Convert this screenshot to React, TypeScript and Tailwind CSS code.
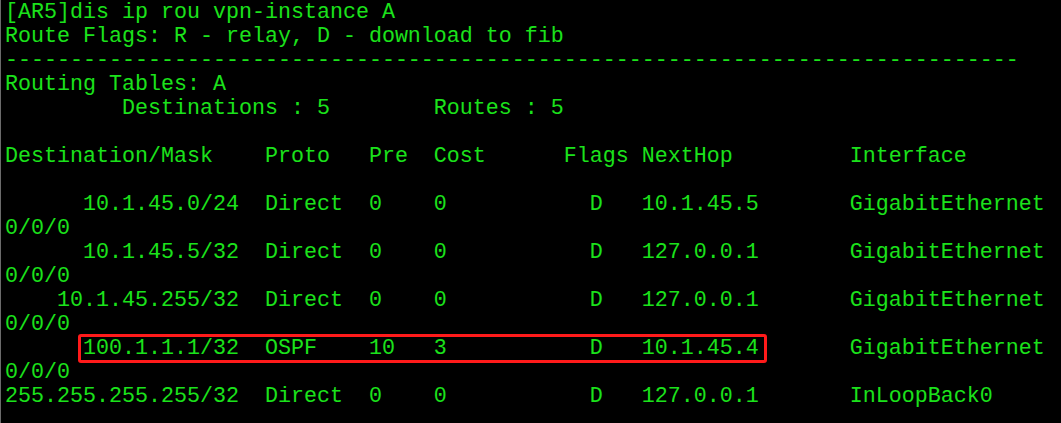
const lines: string[] = [
  "[AR5]dis ip rou vpn-instance A",
  "Route Flags: R - relay, D - download to fib",
  "-".repeat(78),
  "Routing Tables: A",
  "         Destinations : 5        Routes : 5",
  "",
  "Destination/Mask    Proto   Pre  Cost      Flags NextHop         Interface",
  "",
  "      10.1.45.0/24  Direct  0    0           D   10.1.45.5       GigabitEthernet",
  "0/0/0",
  "      10.1.45.5/32  Direct  0    0           D   127.0.0.1       GigabitEthernet",
  "0/0/0",
  "    10.1.45.255/32  Direct  0    0           D   127.0.0.1       GigabitEthernet",
  "0/0/0",
  "      100.1.1.1/32  OSPF    10   3           D   10.1.45.4       GigabitEthernet",
  "0/0/0",
  "255.255.255.255/32  Direct  0    0           D   127.0.0.1       InLoopBack0",
];

export default function App() {
  return (
    <div className="relative w-[1061px] h-[423px] overflow-hidden bg-black border-l border-[#6b6b6b]">
      <pre className="pl-[4px] pt-[1px] font-['Liberation_Mono',monospace] text-[21.67px] leading-[24px] text-[#1be21b]">
        {lines.map((l, i) => (
          <div key={i} className="h-[24px]">
            {l}
          </div>
        ))}
      </pre>
      {/* highlight around the OSPF route */}
      <div className="absolute left-[77px] top-[334px] w-[689px] h-[29px] rounded-[3px] border-[3px] border-[#ff1a1a]" />
    </div>
  );
}
